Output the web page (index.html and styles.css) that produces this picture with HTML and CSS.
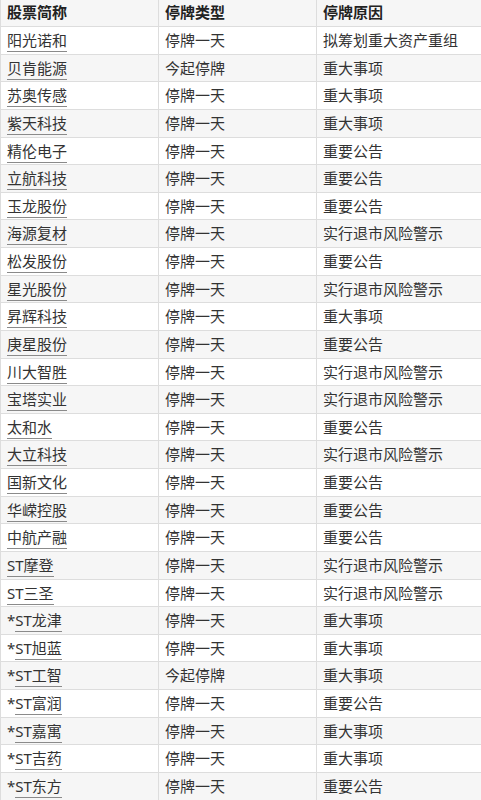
FILE: index.html
```html
<!DOCTYPE html>
<html lang="zh-CN">
<head>
<meta charset="utf-8">
<title>停牌一览</title>
<link rel="stylesheet" href="styles.css">
</head>
<body>
<table class="stock-table">
  <thead>
    <tr><th class="c1">股票简称</th><th class="c2">停牌类型</th><th class="c3">停牌原因</th></tr>
  </thead>
  <tbody>
    <tr><td><a class="stock">阳光诺和</a></td><td>停牌一天</td><td>拟筹划重大资产重组</td></tr>
    <tr><td><a class="stock">贝肯能源</a></td><td>今起停牌</td><td>重大事项</td></tr>
    <tr><td><a class="stock">苏奥传感</a></td><td>停牌一天</td><td>重大事项</td></tr>
    <tr><td><a class="stock">紫天科技</a></td><td>停牌一天</td><td>重大事项</td></tr>
    <tr><td><a class="stock">精伦电子</a></td><td>停牌一天</td><td>重要公告</td></tr>
    <tr><td><a class="stock">立航科技</a></td><td>停牌一天</td><td>重要公告</td></tr>
    <tr><td><a class="stock">玉龙股份</a></td><td>停牌一天</td><td>重要公告</td></tr>
    <tr><td><a class="stock">海源复材</a></td><td>停牌一天</td><td>实行退市风险警示</td></tr>
    <tr><td><a class="stock">松发股份</a></td><td>停牌一天</td><td>重要公告</td></tr>
    <tr><td><a class="stock">星光股份</a></td><td>停牌一天</td><td>实行退市风险警示</td></tr>
    <tr><td><a class="stock">昇辉科技</a></td><td>停牌一天</td><td>重大事项</td></tr>
    <tr><td><a class="stock">庚星股份</a></td><td>停牌一天</td><td>重要公告</td></tr>
    <tr><td><a class="stock">川大智胜</a></td><td>停牌一天</td><td>实行退市风险警示</td></tr>
    <tr><td><a class="stock">宝塔实业</a></td><td>停牌一天</td><td>实行退市风险警示</td></tr>
    <tr><td><a class="stock">太和水</a></td><td>停牌一天</td><td>重要公告</td></tr>
    <tr><td><a class="stock">大立科技</a></td><td>停牌一天</td><td>实行退市风险警示</td></tr>
    <tr><td><a class="stock">国新文化</a></td><td>停牌一天</td><td>重要公告</td></tr>
    <tr><td><a class="stock">华嵘控股</a></td><td>停牌一天</td><td>重要公告</td></tr>
    <tr><td><a class="stock">中航产融</a></td><td>停牌一天</td><td>重要公告</td></tr>
    <tr><td><a class="stock">ST摩登</a></td><td>停牌一天</td><td>实行退市风险警示</td></tr>
    <tr><td><a class="stock">ST三圣</a></td><td>停牌一天</td><td>实行退市风险警示</td></tr>
    <tr><td>*<a class="stock">ST龙津</a></td><td>停牌一天</td><td>重大事项</td></tr>
    <tr><td>*<a class="stock">ST旭蓝</a></td><td>停牌一天</td><td>重大事项</td></tr>
    <tr><td>*<a class="stock">ST工智</a></td><td>今起停牌</td><td>重大事项</td></tr>
    <tr><td>*<a class="stock">ST富润</a></td><td>停牌一天</td><td>重要公告</td></tr>
    <tr><td>*<a class="stock">ST嘉寓</a></td><td>停牌一天</td><td>重大事项</td></tr>
    <tr><td>*<a class="stock">ST吉药</a></td><td>停牌一天</td><td>重大事项</td></tr>
    <tr><td>*<a class="stock">ST东方</a></td><td>停牌一天</td><td>重要公告</td></tr>
  </tbody>
</table>
</body>
</html>
```
FILE: styles.css
```css
html, body {
  margin: 0;
  padding: 0;
  background: #ffffff;
  overflow: hidden;
}
body {
  font-family: "Noto Sans", "Noto Sans CJK SC", sans-serif;
  font-size: 15px;
  color: #333333;
}
.stock-table {
  border-collapse: collapse;
  width: 490px;
  margin-top: -1.6px;
  table-layout: fixed;
}
.stock-table th,
.stock-table td {
  border: 1px solid #dddddd;
  padding: 3px 6px;
  line-height: 20.63px;
  height: 20.63px;
  text-align: left;
  vertical-align: middle;
  white-space: nowrap;
  overflow: hidden;
}
.stock-table th {
  font-weight: bold;
  background: #f6f6f6;
  color: #222222;
}
.stock-table .c1 { width: 145px; }
.stock-table .c2 { width: 145px; }
.stock-table tbody tr:nth-child(even) td {
  background: #f6f6f6;
}
.stock {
  color: #333333;
  text-decoration: none;
  border-bottom: 1px solid #8a8a8a;
  padding-bottom: 1px;
}
```
